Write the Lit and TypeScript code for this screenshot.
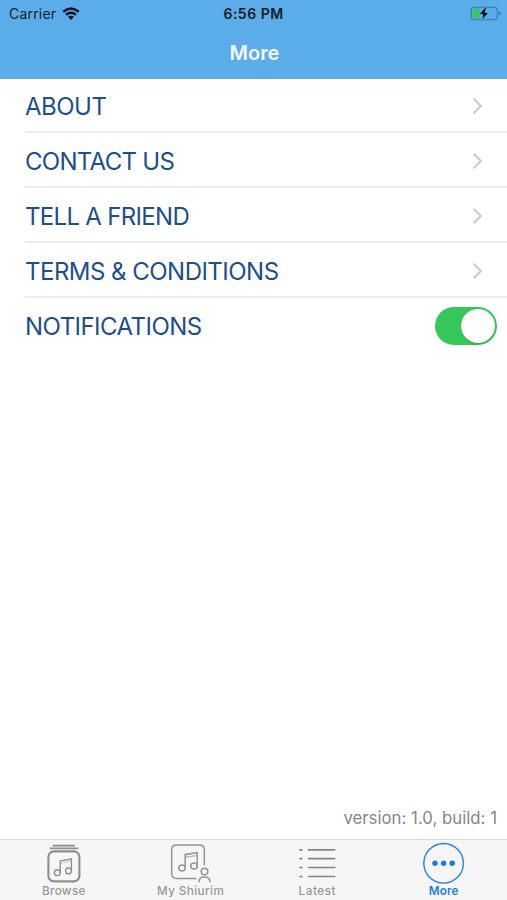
import { LitElement, html, svg, css } from "lit";
import { customElement, property, state } from "lit/decorators.js";
import { classMap } from "lit/directives/class-map.js";

const icons: Record<string, unknown> = {
  browse: svg`<g fill="none" stroke="#8e8e8e">
    <path stroke-width="1.8" d="M13.7 5.6H35.9M10.7 8.4H39.4"/>
    <rect x="9.4" y="11.4" width="31" height="30" rx="5.5" stroke-width="2.1"/>
    <g stroke-width="1.4">
      <path d="M21.2 32.6V21.1L32.4 18.8V30.6"/><path d="M21.2 23.2L32.4 20.9" stroke-opacity=".3"/>
      <circle cx="18.3" cy="32.7" r="2.9"/><circle cx="29.5" cy="30.9" r="2.9"/>
    </g></g>`,
  shiurim: svg`<g fill="none" stroke="#959595" stroke-width="1.5">
    <path d="M30.6 38.4H10.4Q5.7 38.4 5.7 33.7V9.7Q5.7 5 10.4 5H33.6Q38.3 5 38.3 9.7V25.2"/>
    <path d="M19.2 27.8V14.4L31.2 12.7V25.8"/><path d="M19.2 17.2L31.2 15.5" stroke-opacity=".55"/>
    <ellipse cx="16" cy="28" rx="3.2" ry="3"/><ellipse cx="28" cy="26" rx="3.2" ry="3"/>
    <circle cx="38.5" cy="31.6" r="3.3"/>
    <path d="M32.9 42.2Q32.9 37 38.5 37Q44.1 37 44.1 42.2"/></g>`,
  latest: svg`<g stroke="#858585" stroke-width="1.7" stroke-linecap="round">
    ${[9.8, 18.6, 27.5, 36.5].map((y) => svg`<path d="M7 ${y}h1.8M15.6 ${y}h26"/>`)}</g>`,
  more: svg`<circle cx="23.6" cy="23.3" r="19.8" fill="none" stroke="#2280ee" stroke-width="1.4"/>
    <g fill="#147af0"><circle cx="15" cy="23.3" r="2.7"/><circle cx="23.6" cy="23.3" r="2.7"/><circle cx="32.2" cy="23.3" r="2.7"/></g>`,
};

@customElement("status-bar")
class StatusBar extends LitElement {
  static styles = css`
    :host { display: grid; grid-template-columns: 1fr auto 1fr; align-items: center; height: 27px; padding: 0 6px 0 9px; color: #101c28; }
    .carrier { display: flex; align-items: center; gap: 6px; font-size: 14px; letter-spacing: 0.2px; }
    .time { margin-right: 3px; font-size: 14px; font-weight: 600; letter-spacing: 0.5px; }
    .battery { justify-self: end; }
    svg { display: block; }
  `;
  render() {
    return html`
      <div class="carrier"><span>Carrier</span>
        <svg width="18" height="14" viewBox="0 0 19 15">
          <g fill="none" stroke="#08131e" stroke-width="2.6">
            <path d="M1.2 5.1Q9.5 -2 17.8 5.1"/><path d="M4.1 8.4Q9.5 3.8 14.9 8.4"/>
          </g>
          <path fill="#08131e" d="M6.3 10.5Q9.5 8 12.7 10.5L9.5 13.8Z"/>
        </svg>
      </div>
      <div class="time">6:56 PM</div>
      <svg class="battery" width="31" height="16" viewBox="0 0 31 16">
        <rect x="1.2" y="1.2" width="26" height="12.6" rx="3.2" fill="none" stroke="#3b76a5" stroke-width="1.1"/>
        <path d="M28.8 5Q30.7 5.6 30.7 7.3Q30.7 9 28.8 9.6Z" fill="#3b76a5"/>
        <rect x="3" y="2.8" width="7" height="9.4" rx="1.2" fill="#36c860"/>
        <path d="M15.8 .4L9 8.5H12.8L11.4 14.4L19 6.4H15.2L16.8 .4Z" fill="#070d12" stroke="#5aace8" stroke-width="1"/>
      </svg>`;
  }
}

@customElement("menu-row")
class MenuRow extends LitElement {
  @property() label = "";
  @property() tracking = "0px";
  @property({ type: Boolean }) toggle = false;
  @state() on = true;
  static styles = css`
    :host { display: block; padding-left: 25px; }
    .row { display: flex; align-items: center; justify-content: space-between; box-sizing: border-box; height: 55px; padding: 3px 24px 0 0; border-bottom: 2px solid #ececed; }
    .row.last { border-bottom-color: transparent; padding-right: 10px; }
    .label { font-size: 24px; line-height: 28px; padding-top: 1px; color: #1c4f8b; white-space: nowrap; }
    .chevron { display: block; }
    .switch { display: flex; justify-content: flex-end; box-sizing: border-box; width: 62px; height: 38px; padding: 2px; border: 0; border-radius: 19px; background: #35c759; }
    .switch.off { justify-content: flex-start; background: #e5e5e9; }
    .knob { width: 34px; height: 34px; border-radius: 50%; background: #fff; box-shadow: 0 1px 2px rgba(0, 60, 0, 0.2); }
  `;
  render() {
    return html`<div class=${classMap({ row: true, last: this.toggle })}>
      <span class="label" style="letter-spacing:${this.tracking}">${this.label}</span>
      ${this.toggle
        ? html`<button class=${classMap({ switch: true, off: !this.on })} aria-label=${this.label} @click=${() => (this.on = !this.on)}><span class="knob"></span></button>`
        : html`<svg class="chevron" width="11" height="18" viewBox="0 0 11 18"><path d="M1.6 1.8L8.9 9L1.6 16.2" fill="none" stroke="#cbcbcc" stroke-width="2.1"/></svg>`}
    </div>`;
  }
}

@customElement("tab-item")
class TabItem extends LitElement {
  @property() icon = "";
  @property() label = "";
  @property() tracking = "0px";
  @property({ type: Boolean }) active = false;
  static styles = css`
    :host { display: flex; flex-direction: column; align-items: center; flex: 1 1 0; min-width: 0; }
    svg { display: block; }
    .name { padding-left: 1px; font-size: 11.7px; line-height: 14px; font-weight: 500; color: #979797; white-space: nowrap; }
    .name.active { padding-left: 0; color: #1c7ef0; font-weight: 600; }
  `;
  render() {
    return html`<svg width="48" height="44" viewBox="0 0 48 44">${icons[this.icon]}</svg>
      <span class=${classMap({ name: true, active: this.active })} style="letter-spacing:${this.tracking}">${this.label}</span>`;
  }
}

@customElement("app-root")
class AppRoot extends LitElement {
  static styles = css`
    :host { display: flex; flex-direction: column; width: 507px; height: 900px; background: #fff; font-family: Inter, "Liberation Sans", sans-serif; overflow: hidden; }
    .header { height: 79px; background: #5bade9; }
    .title { margin: 0; padding-left: 2px; text-align: center; font-size: 20px; line-height: 52px; font-weight: 600; letter-spacing: -0.05px; color: #f5faff; }
    .menu { flex: 1; margin-top: -1px; }
    .version { padding: 0 10px 10px; text-align: right; font-size: 16.8px; line-height: 22px; color: #858588; }
    .tabs { display: flex; box-sizing: border-box; height: 61px; border-top: 1px solid #d9d9da; background: #f7f6f7; }
  `;
  render() {
    return html`
      <header class="header"><status-bar></status-bar><h1 class="title">More</h1></header>
      <main class="menu">
        <menu-row label="ABOUT" tracking="-0.5px"></menu-row>
        <menu-row label="CONTACT US" tracking="-0.7px"></menu-row>
        <menu-row label="TELL A FRIEND" tracking="-0.69px"></menu-row>
        <menu-row label="TERMS & CONDITIONS" tracking="-0.52px"></menu-row>
        <menu-row label="NOTIFICATIONS" tracking="-0.54px" toggle></menu-row>
      </main>
      <div class="version">version: 1.0, build: 1</div>
      <nav class="tabs">
        <tab-item icon="browse" label="Browse" tracking="0.35px"></tab-item>
        <tab-item icon="shiurim" label="My Shiurim" tracking="0.4px"></tab-item>
        <tab-item icon="latest" label="Latest" tracking="0.55px"></tab-item>
        <tab-item icon="more" label="More" tracking="0.15px" active></tab-item>
      </nav>`;
  }
}
